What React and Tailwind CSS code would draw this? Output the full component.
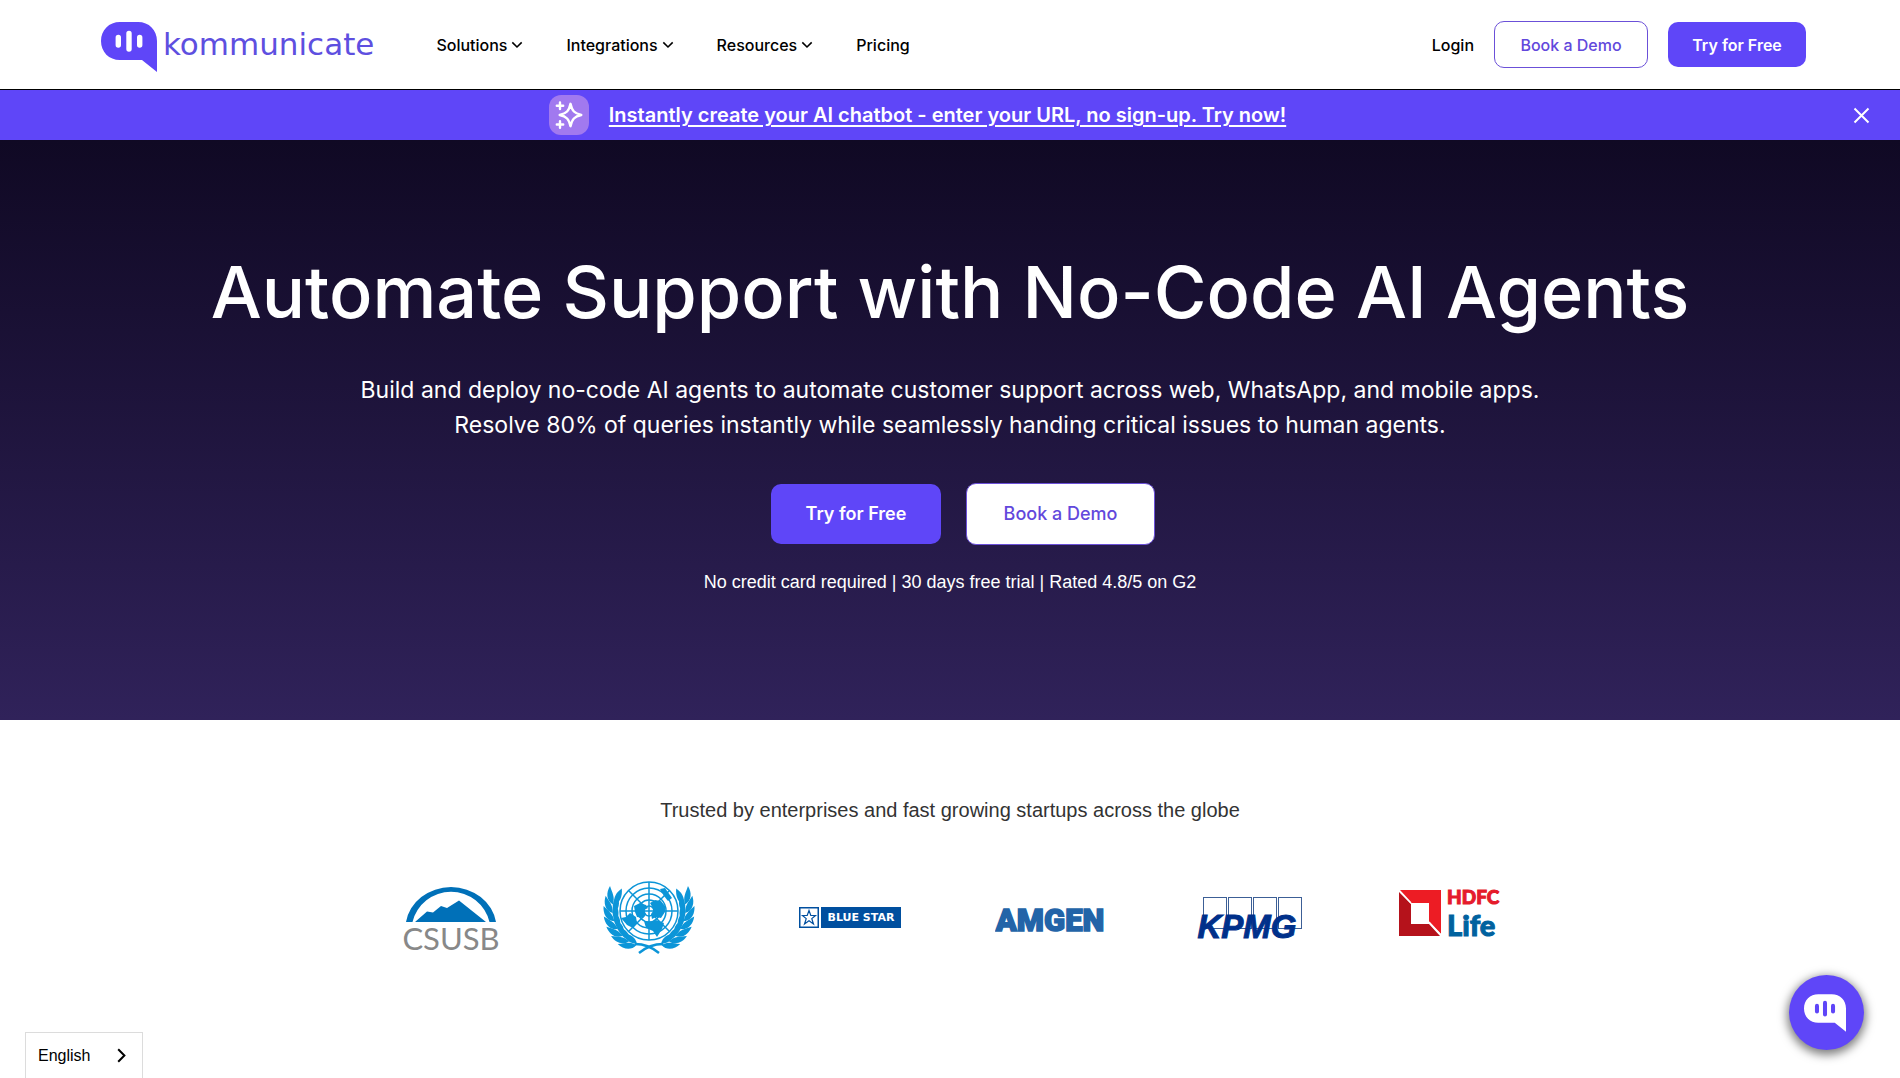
import React from 'react';

const NAV = [
  { label: 'Solutions', menu: true },
  { label: 'Integrations', menu: true },
  { label: 'Resources', menu: true },
  { label: 'Pricing', menu: false },
];

export default function App() {
  return (
    <div className="w-full min-h-screen bg-white font-['Inter',sans-serif] text-black overflow-hidden">
      <Header />
      <Banner />
      <Hero />
      <Trusted />

      {/* Language switcher */}
      <button className="fixed left-[25px] bottom-0 h-[46px] w-[118px] flex items-center justify-between pl-3 pr-4 bg-white border border-b-0 border-[#dcdcdc] font-['Liberation_Sans',sans-serif] text-base">
        English
        <svg width="9" height="15" viewBox="0 0 9 15" fill="none" stroke="currentColor" strokeWidth="2">
          <path d="M1.2 1.2L7.4 7.5L1.2 13.8" />
        </svg>
      </button>

      {/* Chat launcher */}
      <button
        aria-label="Open chat"
        className="fixed right-9 bottom-7 size-[75px] pr-1 rounded-full bg-[#5f46f8] flex items-center justify-center text-white shadow-[0_3px_10px_2px_rgba(0,0,0,0.5)]"
      >
        <ChatMark className="w-[42px] h-[38px]" barColor="#5f46f8" />
      </button>
    </div>
  );
}

function Header() {
  return (
    <header className="h-[90px] w-full flex items-center justify-between pl-[101px] pr-[94px] bg-white border-b border-black">
      <div className="flex items-center">
        <a href="#home" className="flex items-center gap-1.5 text-[#5f46f8]">
          <ChatMark className="w-14 h-[50px] mt-1" barColor="#ffffff" />
          <span className="font-['DejaVu_Sans',sans-serif] text-[31px] leading-none text-[#5e4fe0]">kommunicate</span>
        </a>
        <nav className="ml-[62px] flex items-center gap-[43px] text-base font-medium">
          {NAV.map((item) => (
            <a key={item.label} href={'#' + item.label.toLowerCase()} className="flex items-center gap-1">
              {item.label}
              {item.menu && <Chevron />}
            </a>
          ))}
        </nav>
      </div>
      <div className="flex items-center gap-5 text-base font-medium">
        <a href="#login">Login</a>
        <button className="h-[47px] w-[154px] rounded-[10px] border border-[#6b50d8] text-[#6248dc]">Book a Demo</button>
        <button className="h-[45px] w-[138px] rounded-[10px] bg-[#5f46f8] text-white font-semibold">Try for Free</button>
      </div>
    </header>
  );
}

function Banner() {
  return (
    <div className="h-[50px] w-full flex items-center bg-[#5f46f8] text-white px-[30px]">
      <div className="flex-1 flex items-center justify-center gap-5 pr-12">
        <span className="size-10 rounded-xl bg-[#a179ef] flex items-center justify-center">
          <Sparkles />
        </span>
        <a href="#try" className="text-xl font-semibold underline underline-offset-3 decoration-2">
          Instantly create your AI chatbot - enter your URL, no sign-up. Try now!
        </a>
      </div>
      <button aria-label="Close">
        <svg width="17" height="17" viewBox="0 0 17 17" fill="none" stroke="currentColor" strokeWidth="2">
          <path d="M1.5 1.5L15.5 15.5M15.5 1.5L1.5 15.5" />
        </svg>
      </button>
    </div>
  );
}

function Hero() {
  return (
    <section className="w-full h-[580px] pt-[104px] flex flex-col items-center bg-linear-to-b from-[#100924] to-[#30225a] text-white text-center">
      <h1 className="text-7xl leading-[96px] font-medium">Automate Support with No-Code AI Agents</h1>
      <p className="mt-[33px] text-[23px] leading-[35px]">
        Build and deploy no-code AI agents to automate customer support across web, WhatsApp, and mobile apps.
        <br />
        Resolve 80% of queries instantly while seamlessly handing critical issues to human agents.
      </p>
      <div className="mt-10 ml-[26px] flex items-center gap-[25px] text-lg">
        <button className="h-[60px] w-[170px] rounded-[10px] bg-[#5f46f8] font-semibold">Try for Free</button>
        <button className="h-[62px] w-[189px] rounded-[10px] bg-white border border-[#6b50d8] text-[#6248dc] font-medium">
          Book a Demo
        </button>
      </div>
      <p className="mt-6 font-['Liberation_Sans',sans-serif] text-lg leading-[26px]">
        No credit card required | 30 days free trial | Rated 4.8/5 on G2
      </p>
    </section>
  );
}

function Trusted() {
  return (
    <section className="w-full pt-[75px] flex flex-col items-center">
      <h2 className="font-['Liberation_Sans',sans-serif] text-xl leading-[30px] text-[#333333]">
        Trusted by enterprises and fast growing startups across the globe
      </h2>
      <div className="mt-[50px] w-full max-w-[1200px] grid grid-cols-6 justify-items-center">
        <CsusbLogo />
        <UnLogo />
        <BlueStarLogo />
        <AmgenLogo />
        <KpmgLogo />
        <HdfcLogo />
      </div>
    </section>
  );
}

function Chevron() {
  return (
    <svg width="12" height="8" viewBox="0 0 12 8" fill="none" stroke="currentColor" strokeWidth="1.6">
      <path d="M1.3 1.4L6 6L10.7 1.4" />
    </svg>
  );
}

function ChatMark({ className, barColor }) {
  return (
    <svg className={className} viewBox="0 0 56 50" fill="none">
      <path d="M19 0H37C48 0 56 8 56 19V50L41 38H19C8 38 0 30 0 19S8 0 19 0Z" fill="currentColor" />
      <g stroke={barColor} strokeWidth="5.4" strokeLinecap="round">
        <path d="M17.3 15.5V23M28 11.5V27M38.7 15.5V23" />
      </g>
    </svg>
  );
}

function Sparkles() {
  return (
    <svg width="28" height="28" viewBox="0 0 28 28" fill="none" stroke="currentColor" strokeWidth="2.4" strokeLinejoin="round" strokeLinecap="round">
      <path d="M15.500 2.800C17 10 19.500 12.500 26.300 14C19.500 15.500 17 18 15.500 25.200C14 18 11.500 15.500 4.700 14C11.500 12.500 14 10 15.500 2.800Z" />
      <path d="M5 1.500V8M1.800 4.800H8.200M5 20.200V26.800M1.800 23.500H8.200" />
    </svg>
  );
}

function CsusbLogo() {
  return (
    <svg width="110" height="96" viewBox="0 0 110 96" role="img" aria-label="CSUSB">
      <path d="M11 47A45.500 41 0 0 1 101 47H94.500A39.500 39 0 0 0 17.500 47Z" fill="#0070b8" />
      <path d="M20 47L32 36.500L38 37.500L46 31L52 33L64 25.500L91 47Z" fill="#0070b8" />
      <text x="56" y="75" textAnchor="middle" fontFamily="Lato, sans-serif" fontSize="31" fill="#888888">CSUSB</text>
    </svg>
  );
}

// one wreath branch is drawn from leaves set along an arc, then mirrored
const LEAVES = [196, 183, 170, 157, 144, 131, 118];

function Wreath() {
  return (
    <g>
      {LEAVES.map((deg) => {
        const a = (deg * Math.PI) / 180;
        const x = 54 + 36 * Math.cos(a);
        const y = 35 + 37 * Math.sin(a);
        return (
          <g key={deg} transform={`translate(${x} ${y}) rotate(${deg - 180})`} fill="#0c95d8">
            <path d="M0 5C-8 3 -10 -5 -8 -12C-4 -6 0 -3 0 5Z" />
            <path d="M1 5C-2 -3 0 -8 4 -13C7 -5 6 1 1 5Z" />
          </g>
        );
      })}
      <path d="M40 69C49 69 58 73 64 78" fill="none" stroke="#0c95d8" strokeWidth="2.4" />
    </g>
  );
}

function UnLogo() {
  return (
    <svg width="110" height="96" viewBox="0 0 110 96" role="img" aria-label="United Nations">
      <g fill="none" stroke="#0c95d8" strokeWidth="1.500">
        <circle cx="54" cy="36" r="29" />
        <circle cx="54" cy="36" r="23" />
        <circle cx="54" cy="36" r="17" />
        <circle cx="54" cy="36" r="11" />
        <circle cx="54" cy="36" r="5" />
        <path d="M54 7V65M25 36H83M33.500 15.500L50 32M58 32L74.500 15.500M33.500 56.500L50 40M58 40L74.500 56.500" />
      </g>
      <g fill="#0c95d8">
        <path d="M39 31L45 28L51 30L53 33L49 35L51 39L48 43L42 42L40 37Z" />
        <path d="M26 43L31 42L35 38L41 42L42 48L38 53L32 50Z" />
        <path d="M55 28L60 25L66 26L70 31L70 37L66 43L61 42L57 44L56 39L59 35Z" />
        <path d="M49 46L56 47L61 45L69 48L67 54L62 62L58 56L51 53Z" />
        <path d="M65 14L70 13L77 23L73 26L69 21Z" />
      </g>
      <Wreath />
      <g transform="translate(108 0) scale(-1 1)">
        <Wreath />
      </g>
    </svg>
  );
}

function BlueStarLogo() {
  return (
    <svg width="110" height="96" viewBox="0 0 110 96" role="img" aria-label="Blue Star">
      <rect x="4.750" y="32.750" width="18.500" height="19.500" fill="#ffffff" stroke="#004f9f" strokeWidth="1.500" />
      <path d="M14 35.500L15.800 40.500H20.500L16.800 43.600L18.500 49L14 45.800L9.500 49L11.200 43.600L7.500 40.500H12.200Z" fill="none" stroke="#004f9f" strokeWidth="1.200" />
      <rect x="26" y="32" width="80" height="21" fill="#004f9f" />
      <text x="66" y="46" textAnchor="middle" fontFamily="DejaVu Sans, sans-serif" fontWeight="700" fontSize="11" fill="#ffffff">BLUE STAR</text>
    </svg>
  );
}

function AmgenLogo() {
  return (
    <svg width="110" height="96" viewBox="0 0 110 96" role="img" aria-label="Amgen">
      <text x="55" y="56" textAnchor="middle" fontFamily="Roboto, sans-serif" fontWeight="900" fontSize="31" fill="#2364a8" stroke="#2364a8" strokeWidth="1.500">AMGEN</text>
    </svg>
  );
}

function KpmgLogo() {
  return (
    <svg width="110" height="96" viewBox="0 0 110 96" role="img" aria-label="KPMG">
      <g fill="#ffffff" stroke="#3c5f96" strokeWidth="1">
        <rect x="8.500" y="22.500" width="23" height="31" />
        <rect x="33.500" y="22.500" width="23" height="31" />
        <rect x="58.500" y="22.500" width="23" height="31" />
        <rect x="83.500" y="22.500" width="23" height="31" />
      </g>
      <text x="52" y="63" textAnchor="middle" fontFamily="Liberation Sans, sans-serif" fontWeight="700" fontStyle="italic" fontSize="33" fill="#00308a" stroke="#00308a" strokeWidth="1">KPMG</text>
    </svg>
  );
}

function HdfcLogo() {
  return (
    <svg width="110" height="96" viewBox="0 0 110 96" role="img" aria-label="HDFC Life">
      <path d="M4 15H46V59L34 47V28H16Z" fill="#ed1c24" />
      <path d="M4 17L16 29V49H34L45 61H4Z" fill="#b5121b" />
      <rect x="16" y="28" width="18" height="18" fill="#ffffff" />
      <path d="M4 15L16 28M34 47L46 60" stroke="#ffffff" strokeWidth="1.500" />
      <text x="52" y="29" fontFamily="Lato, sans-serif" fontWeight="900" fontSize="19" fill="#e51b2b" stroke="#e51b2b" strokeWidth="1">HDFC</text>
      <text x="52" y="61" fontFamily="Lato, sans-serif" fontWeight="900" fontSize="29" fill="#00629f" stroke="#00629f" strokeWidth="1">Life</text>
    </svg>
  );
}
